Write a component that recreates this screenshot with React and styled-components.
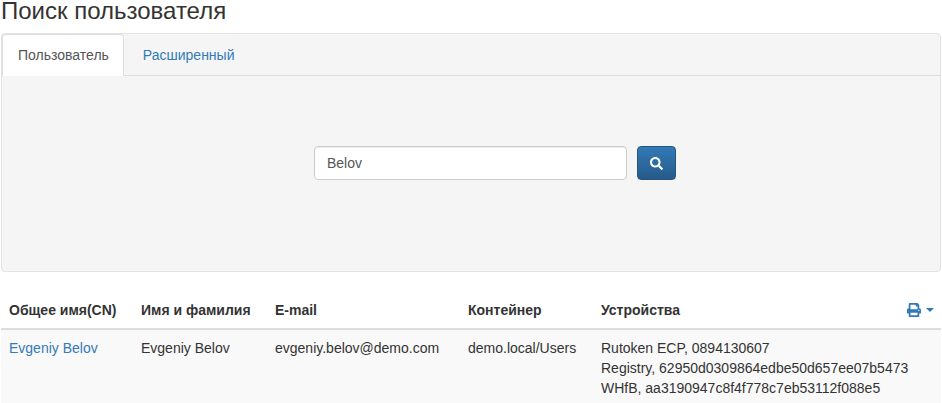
import React from "react";
import styled, { createGlobalStyle } from "styled-components";
import { FaPrint, FaSearch } from "react-icons/fa";

const Global = createGlobalStyle`
  html, body { margin: 0; padding: 0; background: #fff; overflow: hidden; height: 403px; }
  body { font-family: "Liberation Sans", Arial, sans-serif; font-size: 14px; line-height: 20px; color: #333; }
  * { box-sizing: border-box; }
`;
const Page = styled.div`
  width: 942px;
  height: 403px;
  padding: 0 1px;
  overflow: hidden;
`;
const Title = styled.h3`
  margin: 0;
  height: 33px;
  font-size: 24px;
  font-weight: 400;
  line-height: 22px;
  color: #333;
`;
const Panel = styled.section`
  height: 239px;
  background: #f5f5f5;
  border: 1px solid #e3e3e3;
  border-radius: 4px;
  display: flex;
  flex-direction: column;
`;
const Tabs = styled.nav`
  display: flex;
  height: 42px;
  border-bottom: 1px solid #ddd;
  flex: none;
`;
const Tab = styled.a`
  display: block;
  height: 42px;
  padding: ${(p) => (p.$active ? "10px 14px 10px 15px" : "10px 15px")};
  margin-right: ${(p) => (p.$active ? "3px" : "2px")};
  border: 1px solid ${(p) => (p.$active ? "#ddd" : "transparent")};
  border-bottom-color: ${(p) => (p.$active ? "#fff" : "transparent")};
  border-radius: 4px 4px 0 0;
  background: ${(p) => (p.$active ? "#fff" : "transparent")};
  color: ${(p) => (p.$active ? "#555" : "#337ab7")};
`;
const SearchArea = styled.div`
  flex: 1;
  display: flex;
  justify-content: center;
  align-items: flex-start;
  gap: 10px;
  padding: 70px 0 0 48px;
`;
const Input = styled.input`
  width: 313px;
  height: 34px;
  padding: 6px 12px;
  font: 14px/20px "Liberation Sans", Arial, sans-serif;
  color: #555;
  background: #fff;
  border: 1px solid #ccc;
  border-radius: 4px;
  box-shadow: inset 0 1px 1px rgba(0, 0, 0, 0.075);
  outline: none;
`;
const SearchButton = styled.button`
  width: 39px;
  height: 34px;
  display: flex;
  align-items: center;
  justify-content: center;
  padding: 0;
  color: #fff;
  background: linear-gradient(to bottom, #337ab7 0, #265a88 100%);
  border: 1px solid #245580;
  border-radius: 4px;
  font-size: 14px;
`;
const Table = styled.table`
  width: 940px;
  margin-top: 20px;
  border-collapse: collapse;
  table-layout: fixed;
`;
const Th = styled.th`
  height: 37px;
  padding: 8px;
  text-align: left;
  vertical-align: bottom;
  font-weight: 700;
  color: #333;
  border-bottom: 2px solid #ddd;
`;
const ToolCell = styled(Th)`
  padding-right: 7px;
`;
const PrintToggle = styled.span`
  display: flex;
  justify-content: flex-end;
  align-items: center;
  gap: 5px;
  color: #337ab7;
  height: 20px;
`;
const Caret = styled.span`
  width: 0;
  height: 0;
  border-top: 4px solid #337ab7;
  border-left: 4px solid transparent;
  border-right: 4px solid transparent;
`;
const Row = styled.tr`
  background: #f9f9f9;
`;
const Td = styled.td`
  padding: 8px;
  vertical-align: top;
  color: #333;
`;
const Link = styled.a`
  color: #337ab7;
`;
const Line = styled.div`
  white-space: nowrap;
`;

export default function App() {
  return (
    <Page>
      <Global />
      <Title>Поиск пользователя</Title>
      <Panel>
        <Tabs>
          <Tab $active>Пользователь</Tab>
          <Tab>Расширенный</Tab>
        </Tabs>
        <SearchArea>
          <Input defaultValue="Belov" />
          <SearchButton aria-label="Поиск">
            <FaSearch size={13} />
          </SearchButton>
        </SearchArea>
      </Panel>
      <Table>
        <colgroup>
          <col style={{ width: 132 }} />
          <col style={{ width: 134 }} />
          <col style={{ width: 193 }} />
          <col style={{ width: 133 }} />
          <col />
          <col style={{ width: 48 }} />
        </colgroup>
        <thead>
          <tr>
            <Th>Общее имя(CN)</Th>
            <Th>Имя и фамилия</Th>
            <Th>E-mail</Th>
            <Th>Контейнер</Th>
            <Th>Устройства</Th>
            <ToolCell>
              <PrintToggle>
                <FaPrint size={14} />
                <Caret />
              </PrintToggle>
            </ToolCell>
          </tr>
        </thead>
        <tbody>
          <Row>
            <Td><Link>Evgeniy Belov</Link></Td>
            <Td>Evgeniy Belov</Td>
            <Td>evgeniy.belov@demo.com</Td>
            <Td>demo.local/Users</Td>
            <Td>
              <Line>Rutoken ECP, 0894130607</Line>
              <Line>Registry, 62950d0309864edbe50d657ee07b5473</Line>
              <Line>WHfB, aa3190947c8f4f778c7eb53112f088e5</Line>
            </Td>
            <Td />
          </Row>
        </tbody>
      </Table>
    </Page>
  );
}
